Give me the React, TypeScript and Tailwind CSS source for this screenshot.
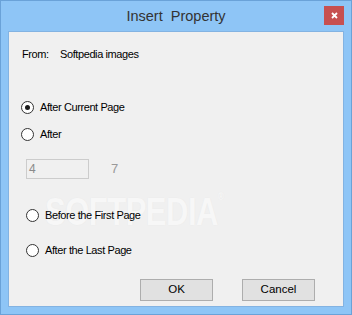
import React from "react";

const font = { fontFamily: '"Liberation Sans", Arial, sans-serif' };

function Radio({ checked }: { checked?: boolean }) {
  return (
    <span className="w-[13px] h-[13px] rounded-full border border-[#333333] bg-white flex items-center justify-center shrink-0">
      {checked && <span className="w-[5px] h-[5px] rounded-full bg-[#1a1a1a]" />}
    </span>
  );
}

export default function App() {
  return (
    <div
      className="w-[352px] h-[315px] bg-[#8ec5f6] border border-[#6aa2d8] flex flex-col relative overflow-hidden"
      style={font}
    >
      <div className="h-[30px] grid grid-cols-[1fr_auto_1fr] items-start">
        <div />
        <div className="text-[14.5px] text-[#333333] leading-[18px] pt-[6px]">
          Insert&nbsp; Property
        </div>
        <div className="flex justify-end pr-[7px] pt-[5px]">
          <div className="w-[20px] h-[19px] bg-[#c75050] flex items-center justify-center">
            <svg width="7" height="7" viewBox="0 0 7 7">
              <path d="M1 1 L6 6 M6 1 L1 6" stroke="white" strokeWidth="1.8" />
            </svg>
          </div>
        </div>
      </div>
      <div className="mx-[7px] mb-[7px] flex-1 bg-[#f0f0f0] border border-[#83b3e2] relative flex flex-col text-[11px] tracking-[-0.4px] text-black">
        <div
          className="absolute left-[36px] top-[160px] text-[31px] font-bold leading-none text-[#f7f7f7] tracking-[-0.5px] scale-y-[1.25] origin-top-left"
          style={{ textShadow: "0 0 1px #e6e6e6" }}
        >
          SOFTPEDIA<span className="text-[8px] align-top">®</span>
        </div>
        <div className="relative flex items-center h-[16px] mt-[14px] ml-[13px] leading-[16px]">
          <span className="w-[38px]">From:</span>
          <span>Softpedia images</span>
        </div>
        <div className="relative flex items-center h-[16px] mt-[37px] ml-[12px] gap-[6px]">
          <Radio checked />
          <span>After Current Page</span>
        </div>
        <div className="relative flex items-center h-[16px] mt-[11px] ml-[12px] gap-[6px]">
          <Radio />
          <span>After</span>
        </div>
        <div className="relative flex items-center mt-[17px] ml-[17px] h-[20px]">
          <div className="w-[63px] h-[20px] border border-[#cccccc] bg-[#f0f0f0] text-[#8a8a8a] text-[12px] leading-[18px] pl-[2px]">
            4
          </div>
          <span className="ml-[22px] text-[#999999] text-[13px]">7</span>
        </div>
        <div className="relative flex items-center h-[16px] mt-[28px] ml-[17px] gap-[6px]">
          <Radio />
          <span>Before the First Page</span>
        </div>
        <div className="relative flex items-center h-[16px] mt-[19px] ml-[17px] gap-[6px]">
          <Radio />
          <span>After the Last Page</span>
        </div>
        <div className="relative flex justify-end mt-[21px] mr-[28px] gap-[29px] text-[11.5px] tracking-normal">
          <div className="w-[73px] h-[22px] bg-[#e1e1e1] border border-[#adadad] flex items-center justify-center">
            OK
          </div>
          <div className="w-[73px] h-[22px] bg-[#e1e1e1] border border-[#adadad] flex items-center justify-center">
            Cancel
          </div>
        </div>
      </div>
    </div>
  );
}
